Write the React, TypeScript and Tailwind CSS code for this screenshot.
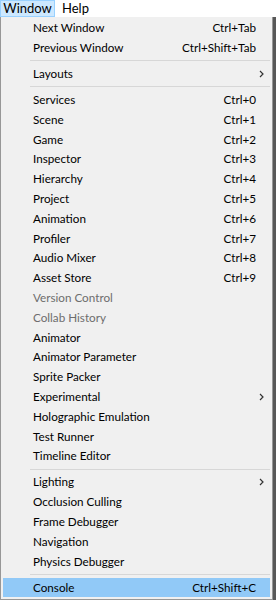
import React from "react";

type Item =
  | { sep: true }
  | { label: string; keys?: string; sub?: boolean; off?: boolean; active?: boolean };

const items: Item[] = [
  { label: "Next Window", keys: "Ctrl+Tab" },
  { label: "Previous Window", keys: "Ctrl+Shift+Tab" },
  { sep: true },
  { label: "Layouts", sub: true },
  { sep: true },
  { label: "Services", keys: "Ctrl+0" },
  { label: "Scene", keys: "Ctrl+1" },
  { label: "Game", keys: "Ctrl+2" },
  { label: "Inspector", keys: "Ctrl+3" },
  { label: "Hierarchy", keys: "Ctrl+4" },
  { label: "Project", keys: "Ctrl+5" },
  { label: "Animation", keys: "Ctrl+6" },
  { label: "Profiler", keys: "Ctrl+7" },
  { label: "Audio Mixer", keys: "Ctrl+8" },
  { label: "Asset Store", keys: "Ctrl+9" },
  { label: "Version Control", off: true },
  { label: "Collab History", off: true },
  { label: "Animator" },
  { label: "Animator Parameter" },
  { label: "Sprite Packer" },
  { label: "Experimental", sub: true },
  { label: "Holographic Emulation" },
  { label: "Test Runner" },
  { label: "Timeline Editor" },
  { sep: true },
  { label: "Lighting", sub: true },
  { label: "Occlusion Culling" },
  { label: "Frame Debugger" },
  { label: "Navigation" },
  { label: "Physics Debugger" },
  { sep: true },
  { label: "Console", keys: "Ctrl+Shift+C", active: true },
];

function Chevron() {
  return (
    <svg width="5" height="8" viewBox="0 0 5 8" className="block">
      <path d="M1 1 L4 4 L1 7" fill="none" stroke="#333" strokeWidth="1.2" />
    </svg>
  );
}

export default function App() {
  return (
    <div
      className="w-[276px] h-[600px] overflow-hidden bg-[#f0f0f0] text-[11.7px] text-black flex flex-col"
      style={{ fontFamily: 'Lato, "Noto Sans", sans-serif' }}
    >
      <div className="h-[17px] bg-white flex items-stretch shrink-0 text-[13px]">
        <div className="w-[55px] bg-[#cce8ff] border border-[#99d1ff] flex items-center justify-center leading-none">
          Window
        </div>
        <div className="px-[7px] flex items-center leading-none">Help</div>
      </div>
      <div className="flex flex-1 min-h-0">
        <div className="w-[273px] border border-[#979797] border-t-0 bg-[#f0f0f0] px-[2px] pt-[1px] flex flex-col">
          {items.map((it, i) =>
            "sep" in it ? (
              <div key={i} className="h-[6.25px] flex items-center pl-[27px]">
                <div className="h-px w-full bg-[#d7d7d7]" />
              </div>
            ) : (
              <div
                key={i}
                className={
                  "h-[19.8px] flex items-center pl-[30px] pr-[14px] " +
                  (it.active ? "bg-[#91c9f7] " : "") +
                  (it.off ? "text-[#6d6d6d]" : "")
                }
              >
                <span className="flex-1 whitespace-nowrap">{it.label}</span>
                {it.keys && <span className="whitespace-nowrap">{it.keys}</span>}
                {it.sub && (
                  <span className="mr-[-8px]">
                    <Chevron />
                  </span>
                )}
              </div>
            )
          )}
        </div>
        <div className="flex-1 bg-[#585858]" />
      </div>
    </div>
  );
}
